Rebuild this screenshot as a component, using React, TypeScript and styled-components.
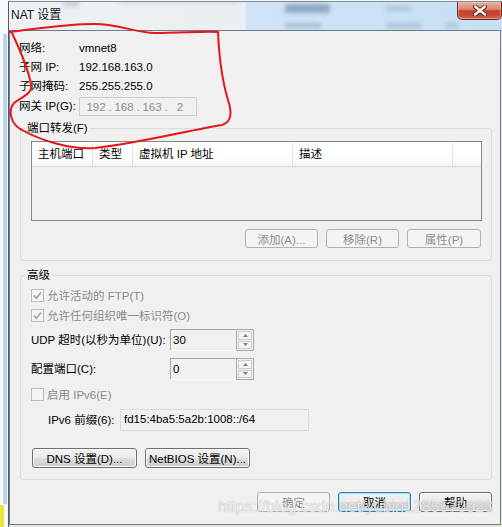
import React from "react";
import styled, { createGlobalStyle } from "styled-components";

const GlobalStyle = createGlobalStyle`
  html, body { margin: 0; padding: 0; }
  body {
    width: 502px;
    height: 527px;
    overflow: hidden;
    background: #f6f8fa;
    font-family: "Liberation Sans", "Noto Sans CJK SC", sans-serif;
    font-size: 11.5px;
    color: #000;
  }
  * { box-sizing: border-box; }
`;

const Desktop = styled.div`
  position: relative;
  width: 502px;
  height: 527px;
  padding: 1px 0 0 8px;
  display: flex;
  background:
    linear-gradient(#ebe53c, #ebe53c) 0 505px / 4px 22px no-repeat,
    linear-gradient(to right, #f6f8fa 0, #f6f8fa 3px, #c6dbef 3px, #b3cee8 7px, #f6f8fa 7px) 0 34px / 8px 470px no-repeat,
    #f6f8fa;
`;

const Window = styled.div`
  flex: 1;
  display: flex;
  flex-direction: column;
  border-top: 1px solid #7f8a96;
  border-left: 1px solid #4e5a66;
  background: linear-gradient(#dce8f3, #e4ecd9);
`;

const TitleBar = styled.div`
  position: relative;
  height: 28px;
  display: flex;
  align-items: flex-start;
  background: linear-gradient(to right, #eef1f4 0, #eceff2 236px, #cfe4f7 237px, #c8dff4 100%);
  overflow: hidden;
`;

const Blob = styled.span<{ $x: number; $y: number; $w: number; $h: number; $c: string }>`
  position: absolute;
  left: ${(p) => p.$x}px;
  top: ${(p) => p.$y}px;
  width: ${(p) => p.$w}px;
  height: ${(p) => p.$h}px;
  background: ${(p) => p.$c};
  filter: blur(2px);
  border-radius: 2px;
`;

const Title = styled.div`
  position: relative;
  padding: 6px 0 0 2px;
  line-height: 14px;
  font-size: 12px;
  color: #141414;
  text-shadow: 0 0 5px rgba(255, 255, 255, 0.95);
`;

const CloseButton = styled.div`
  position: relative;
  margin-left: auto;
  width: 45px;
  height: 18px;
  border: 1px solid #6a2a22;
  border-top: none;
  border-radius: 0 0 5px 5px;
  background: linear-gradient(#eab0a0 0%, #dc8a74 42%, #c6432e 52%, #c4472f 78%, #d9765a 100%);
  box-shadow: inset 0 0 0 1px rgba(255, 200, 190, 0.45);
  display: flex;
  align-items: center;
  justify-content: center;
`;

const Client = styled.div`
  flex: 1;
  margin: 0 1px 2px 0;
  border: 1px solid #6f7c89;
  background: #f0f0f0;
  display: flex;
  flex-direction: column;
`;

const InfoGrid = styled.div`
  margin: 7px 0 0 9px;
  display: grid;
  grid-template-columns: 60px auto;
  grid-template-rows: 19px 19px 19px 21px;
  align-items: center;
  justify-items: start;
`;

const Text = styled.span<{ $muted?: boolean }>`
  line-height: 16px;
  white-space: nowrap;
  color: ${(p) => (p.$muted ? "#8b8b8b" : "#000")};
`;

const IpField = styled.div`
  align-self: end;
  width: 118px;
  height: 19px;
  border: 1px solid #cfcfcf;
  background: #f0f0f0;
  padding-left: 5px;
  display: flex;
  align-items: center;
  color: #8e8e8e;
`;

const Octet = styled.span`
  width: 22px;
  text-align: center;
`;

const Dot = styled.span`
  width: 6px;
  text-align: center;
`;

const Group = styled.fieldset<{ $mt: number }>`
  margin: ${(p) => p.$mt}px 8px 0 10px;
  padding: 0;
  min-width: 0;
  border: 1px solid #d5dfe5;
  border-radius: 3px;
`;

const Legend = styled.legend`
  margin-left: 4px;
  padding: 0 2px;
  line-height: 16px;
`;

const GroupBody = styled.div<{ $pad: string }>`
  padding: ${(p) => p.$pad};
  display: flex;
  flex-direction: column;
`;

const ListView = styled.div`
  height: 80px;
  border: 1px solid #828790;
  background: #f0f0f0;
`;

const ListHeader = styled.div`
  display: flex;
  height: 25px;
  background: linear-gradient(#ffffff 0%, #ffffff 55%, #f4f5f7 100%);
  border-bottom: 1px solid #d5d8dc;
`;

const HeaderCell = styled.div<{ $w: number }>`
  width: ${(p) => p.$w}px;
  padding-left: 6px;
  line-height: 24px;
  border-right: 1px solid #e1e4e8;
  white-space: nowrap;
`;

const Row = styled.div<{ $mt?: number; $pl?: number; $h: number; $gap?: number; $end?: boolean; $mr?: number }>`
  display: flex;
  align-items: center;
  height: ${(p) => p.$h}px;
  margin-top: ${(p) => p.$mt ?? 0}px;
  margin-right: ${(p) => p.$mr ?? 0}px;
  padding-left: ${(p) => p.$pl ?? 0}px;
  gap: ${(p) => p.$gap ?? 0}px;
  justify-content: ${(p) => (p.$end ? "flex-end" : "flex-start")};
`;

const Button = styled.div<{ $w: number; $h: number; $variant?: "normal" | "disabled" | "default" }>`
  width: ${(p) => p.$w}px;
  height: ${(p) => p.$h}px;
  border-radius: 3px;
  display: flex;
  align-items: center;
  justify-content: center;
  white-space: nowrap;
  border: 1px solid
    ${(p) => (p.$variant === "disabled" ? "#adb2b5" : p.$variant === "default" ? "#3c7fb1" : "#707070")};
  color: ${(p) => (p.$variant === "disabled" ? "#8d8d8d" : "#000")};
  background: ${(p) =>
    p.$variant === "disabled"
      ? "#f4f4f4"
      : "linear-gradient(#f2f2f2 0%, #ebebeb 48%, #dddddd 52%, #cfcfcf 100%)"};
  box-shadow: ${(p) =>
    p.$variant === "default"
      ? "inset 0 0 0 1px #9fdcf8, inset 0 0 0 2px #e6f5fc"
      : p.$variant === "disabled"
      ? "none"
      : "inset 0 0 0 1px #fcfcfc"};
`;

const Check = styled.span<{ $gap?: number }>`
  display: flex;
  align-items: center;
  gap: 3px;
  color: #8b8b8b;
`;

const Box = styled.span`
  width: 13px;
  height: 13px;
  border: 1px solid #bcbcbc;
  background: #f4f4f4;
  display: flex;
  align-items: center;
  justify-content: center;
`;

const FieldLabel = styled.span<{ $w: number }>`
  width: ${(p) => p.$w}px;
  line-height: 16px;
  white-space: nowrap;
`;

const Spin = styled.div`
  display: flex;
  width: 84px;
  height: 22px;
`;

const SpinField = styled.div`
  flex: 1;
  border: 1px solid;
  border-color: #a8a8a8 #eeeeee #ffffff #a8a8a8;
  padding: 1px 0 0 2px;
  line-height: 18px;
`;

const SpinButtons = styled.div`
  width: 18px;
  border: 1px solid #acacac;
  padding: 1px;
  display: flex;
  flex-direction: column;
  gap: 1px;
`;

const SpinBtn = styled.div`
  flex: 1;
  border: 1px solid #cdcdcd;
  background: #f3f3f3;
  display: flex;
  align-items: center;
  justify-content: center;
`;

const PrefixField = styled.div`
  width: 189px;
  height: 22px;
  border: 1px solid #dadada;
  background: #f0f0f0;
  padding: 0 0 2px 3px;
  display: flex;
  align-items: center;
`;

const Watermark = styled.span`
  position: absolute;
  left: 218px;
  top: 499px;
  font-family: "Liberation Sans", sans-serif;
  font-size: 16px;
  line-height: 16px;
  color: rgba(255, 255, 255, 0.78);
  text-shadow: 0 0 1px rgba(0, 0, 0, 0.35);
  pointer-events: none;
  white-space: nowrap;
`;

const Annotation = styled.svg`
  position: absolute;
  left: 0;
  top: 0;
  pointer-events: none;
`;

const Tri = ({ up }: { up?: boolean }) => (
  <svg width="5" height="3" viewBox="0 0 5 3">
    <path d={up ? "M0 3 L2.5 0 L5 3 Z" : "M0 0 L5 0 L2.5 3 Z"} fill="#808080" />
  </svg>
);

const SpinBox = ({ value }: { value: string }) => (
  <Spin>
    <SpinField>{value}</SpinField>
    <SpinButtons>
      <SpinBtn>
        <Tri up />
      </SpinBtn>
      <SpinBtn>
        <Tri />
      </SpinBtn>
    </SpinButtons>
  </Spin>
);

const CheckMark = () => (
  <svg width="9" height="9" viewBox="0 0 9 9">
    <path d="M1 4.6 L3.4 7.2 L8 1.4" fill="none" stroke="#a2a2a2" strokeWidth="1.6" />
  </svg>
);

export default function App() {
  return (
    <>
      <GlobalStyle />
      <Desktop>
        <Window>
          <TitleBar>
            <Blob $x={54} $y={-3} $w={16} $h={8} $c="rgba(150,160,170,0.35)" />
            <Blob $x={110} $y={-3} $w={120} $h={5} $c="rgba(170,178,186,0.3)" />
            <Blob $x={276} $y={2} $w={45} $h={9} $c="rgba(95,120,150,0.55)" />
            <Blob $x={376} $y={4} $w={26} $h={5} $c="rgba(120,145,170,0.35)" />
            <Blob $x={276} $y={21} $w={36} $h={5} $c="rgba(110,135,160,0.4)" />
            <Blob $x={377} $y={21} $w={36} $h={5} $c="rgba(110,135,160,0.35)" />
            <Blob $x={436} $y={21} $w={14} $h={5} $c="rgba(110,135,160,0.3)" />
            <Title>NAT 设置</Title>
            <CloseButton>
              <svg width="14" height="11" viewBox="0 0 14 11">
                <path d="M2 1.5 L12 9.5 M12 1.5 L2 9.5" stroke="#4a1e18" strokeWidth="4.2" strokeLinecap="round" />
                <path d="M2 1.5 L12 9.5 M12 1.5 L2 9.5" stroke="#ffffff" strokeWidth="2.4" strokeLinecap="round" />
              </svg>
            </CloseButton>
          </TitleBar>
          <Client>
            <InfoGrid>
              <Text>网络:</Text>
              <Text>vmnet8</Text>
              <Text>子网 IP:</Text>
              <Text>192.168.163.0</Text>
              <Text>子网掩码:</Text>
              <Text>255.255.255.0</Text>
              <Text>网关 IP(G):</Text>
              <IpField>
                <Octet>192</Octet>
                <Dot>.</Dot>
                <Octet>168</Octet>
                <Dot>.</Dot>
                <Octet>163</Octet>
                <Dot>.</Dot>
                <Octet>2</Octet>
              </IpField>
            </InfoGrid>

            <Group $mt={4}>
              <Legend>端口转发(F)</Legend>
              <GroupBody $pad="5px 9px 12px 10px">
                <ListView>
                  <ListHeader>
                    <HeaderCell $w={61}>主机端口</HeaderCell>
                    <HeaderCell $w={40}>类型</HeaderCell>
                    <HeaderCell $w={160}>虚拟机 IP 地址</HeaderCell>
                    <HeaderCell $w={160}>描述</HeaderCell>
                  </ListHeader>
                </ListView>
                <Row $h={19} $mt={8} $gap={8} $end $mr={1}>
                  <Button $w={73} $h={19} $variant="disabled">添加(A)...</Button>
                  <Button $w={73} $h={19} $variant="disabled">移除(R)</Button>
                  <Button $w={74} $h={19} $variant="disabled">属性(P)</Button>
                </Row>
              </GroupBody>
            </Group>

            <Group $mt={6}>
              <Legend>高级</Legend>
              <GroupBody $pad="2px 0 11px 10px">
                <Row $h={20}>
                  <Check>
                    <Box>
                      <CheckMark />
                    </Box>
                    允许活动的 FTP(T)
                  </Check>
                </Row>
                <Row $h={20}>
                  <Check>
                    <Box>
                      <CheckMark />
                    </Box>
                    允许任何组织唯一标识符(O)
                  </Check>
                </Row>
                <Row $h={22} $mt={4}>
                  <FieldLabel $w={139}>UDP 超时(以秒为单位)(U):</FieldLabel>
                  <SpinBox value="30" />
                </Row>
                <Row $h={22} $mt={7}>
                  <FieldLabel $w={139}>配置端口(C):</FieldLabel>
                  <SpinBox value="0" />
                </Row>
                <Row $h={20} $mt={4}>
                  <Check>
                    <Box />
                    启用 IPv6(E)
                  </Check>
                </Row>
                <Row $h={22} $mt={5} $pl={17}>
                  <FieldLabel $w={72}>IPv6 前缀(6):</FieldLabel>
                  <PrefixField>fd15:4ba5:5a2b:1008::/64</PrefixField>
                </Row>
                <Row $h={20} $mt={17} $pl={1} $gap={8}>
                  <Button $w={105} $h={20}>DNS 设置(D)...</Button>
                  <Button $w={105} $h={20}>NetBIOS 设置(N)...</Button>
                </Row>
              </GroupBody>
            </Group>

            <Row $h={20} $mt={12} $mr={8} $gap={8} $end>
              <Button $w={73} $h={20} $variant="disabled">确定</Button>
              <Button $w={73} $h={20} $variant="default">取消</Button>
              <Button $w={73} $h={20}>帮助</Button>
            </Row>
          </Client>
        </Window>

        <Annotation width="502" height="527" viewBox="0 0 502 527">
          <path
            d="M10 32 C 30 30, 60 24, 95 24 C 120 24, 135 33, 155 33 C 180 33, 205 31, 218 32 C 219 55, 222 80, 228 100 C 232 112, 232 122, 222 125 C 190 130, 140 143, 95 148 C 70 150, 40 140, 22 130 C 10 124, 8 110, 14 103 C 22 97, 33 93, 31 85 C 29 70, 20 50, 12 33"
            fill="none"
            stroke="#e8141b"
            strokeWidth="2"
            strokeLinecap="round"
            strokeLinejoin="round"
          />
        </Annotation>
        <Watermark>https://blog.csdn.net/yubin1285570923</Watermark>
      </Desktop>
    </>
  );
}
